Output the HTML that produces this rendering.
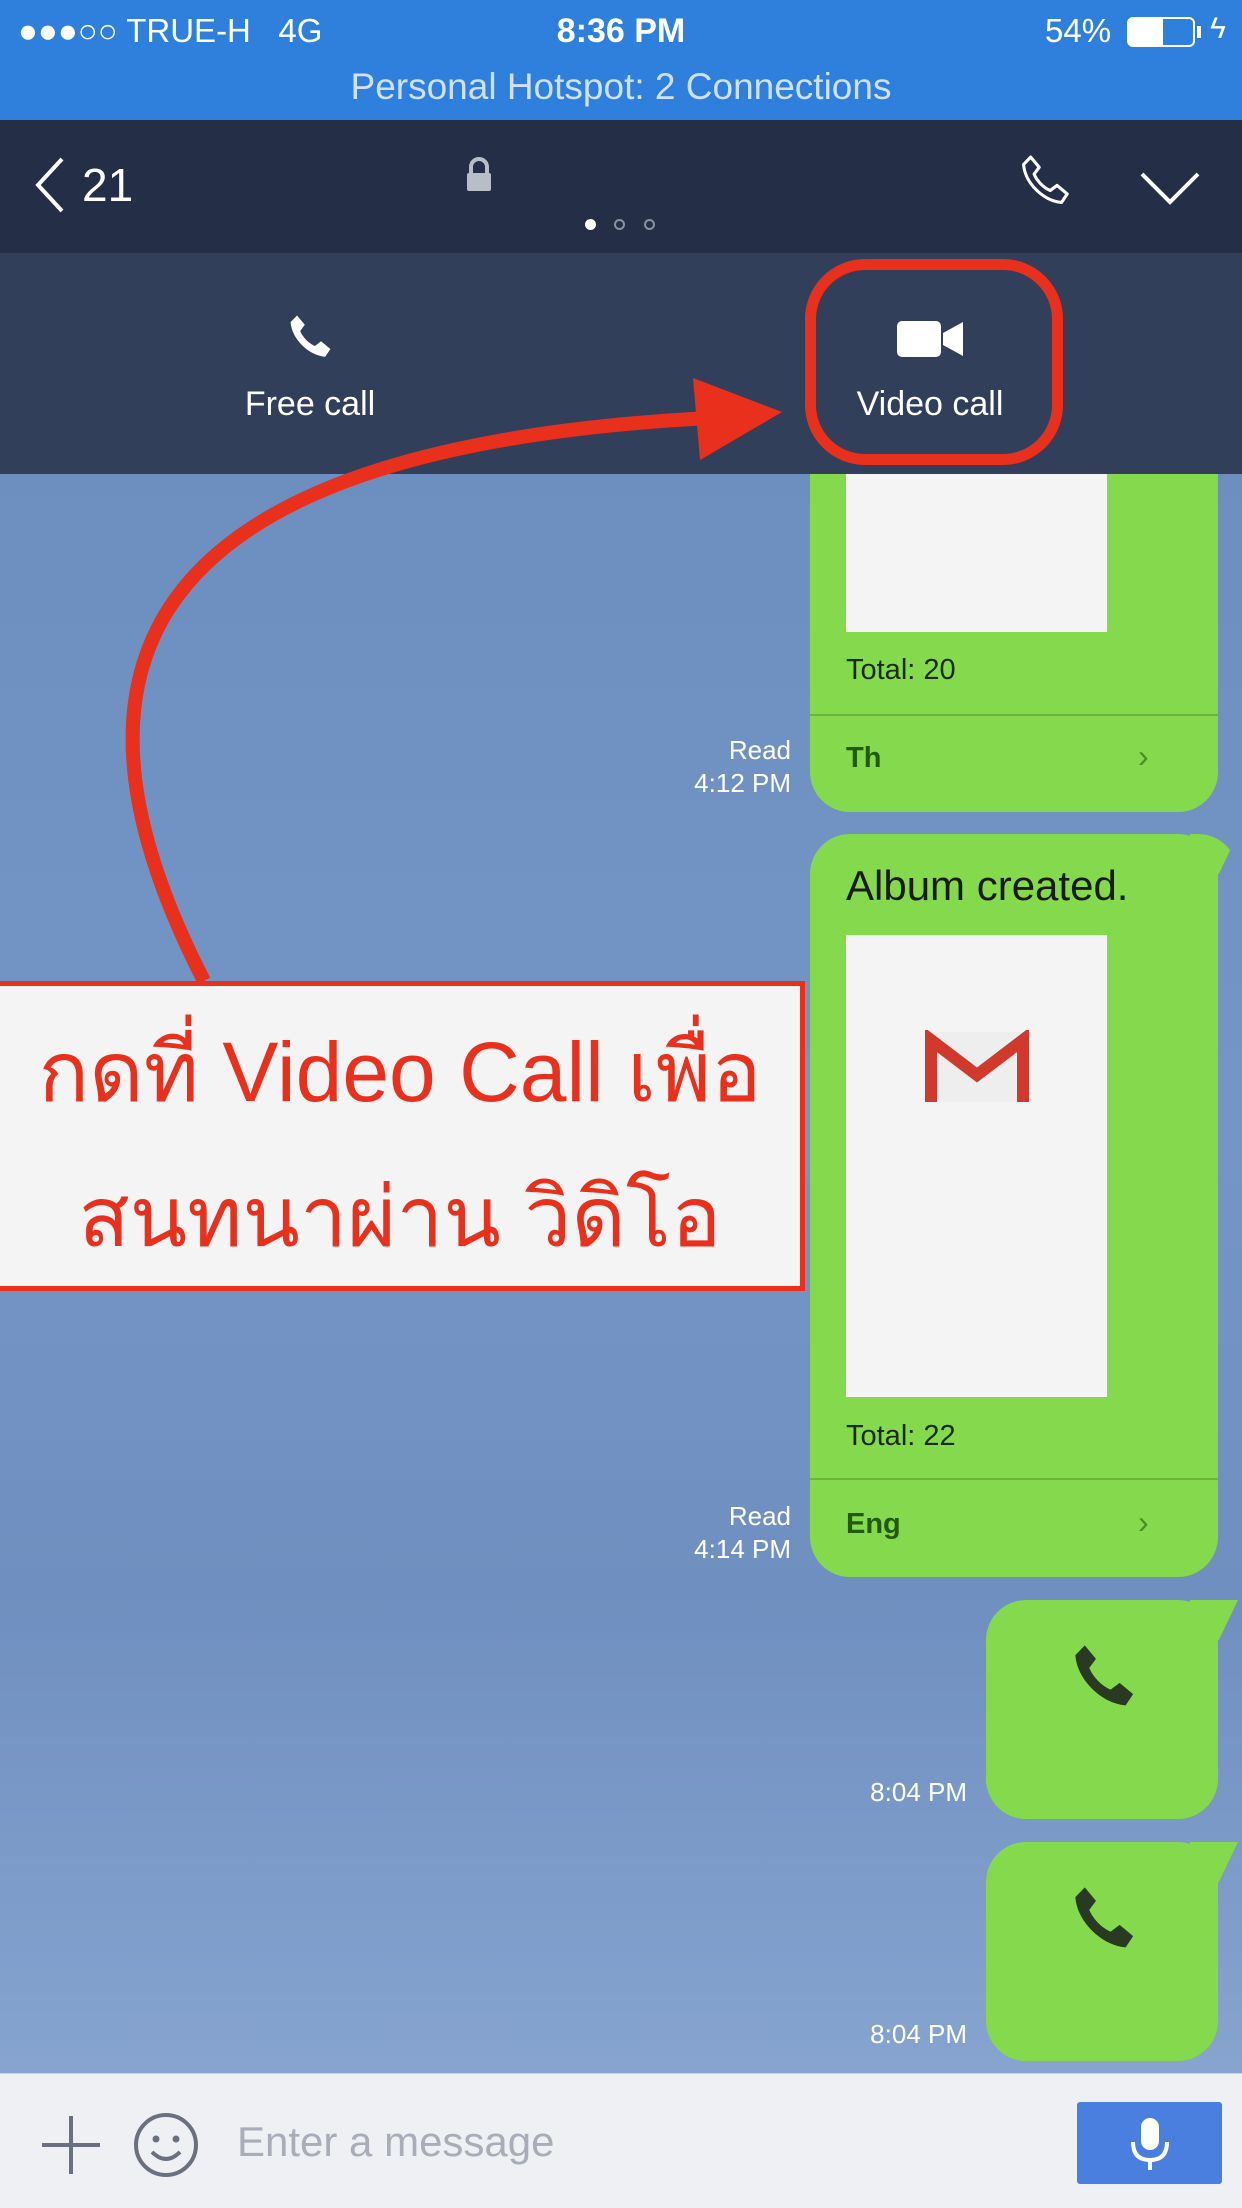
<!DOCTYPE html>
<html><head><meta charset="utf-8"><style>
*{margin:0;padding:0;box-sizing:border-box}
body{width:1242px;height:2208px;position:relative;overflow:hidden;font-family:"Liberation Sans","Noto Sans CJK SC",sans-serif;background:#6d8fbf}
.a{position:absolute}
.status{left:0;top:0;width:1242px;height:120px;background:#2f7fdd;color:#fff}
.nav{left:0;top:120px;width:1242px;height:133px;background:#242e46}
.panel{left:0;top:253px;width:1242px;height:221px;background:#323f5a}
.chat{left:0;top:474px;width:1242px;height:1599px;background:linear-gradient(180deg,#6d8fbf 0%,#7496c6 40%,#6f8fc0 70%,#86a4cf 100%)}
.bub{background:#84d94c;border-radius:40px}
.img{background:#f4f4f4}
.t{color:#1d2a14;font-size:29px}
.time{color:#fff;font-size:26px;text-align:right;line-height:33px}
.tail{width:30px;height:30px;border-top:14px solid #84d94c;border-right:0;border-radius:0 22px 0 0}
.input{left:0;top:2073px;width:1242px;height:135px;background:#eef0f4;border-top:1px solid #d0d4db}
</style></head><body>
<div class="a chat"></div>
<!-- bubble 1 -->
<div class="a bub" style="left:810px;top:420px;width:408px;height:392px"></div>
<div class="a img" style="left:846px;top:474px;width:261px;height:158px"></div>
<div class="a t" style="left:846px;top:654px">Total: 20</div>
<div class="a" style="left:810px;top:714px;width:408px;height:2px;background:#6cb43c"></div>
<div class="a t" style="left:846px;top:742px;font-weight:bold;color:#235a12">Th</div>
<div class="a t" style="left:1138px;top:738px;color:#4e8a2a;font-size:32px">›</div>
<div class="a time" style="left:600px;width:191px;top:734px">Read<br>4:12 PM</div>
<!-- bubble 2 -->
<div class="a bub" style="left:810px;top:834px;width:408px;height:743px"></div>
<div class="a" style="left:1190px;top:834px;width:48px;height:40px;background:#84d94c;border-radius:0 40px 0 0;clip-path:polygon(0 0,100% 0,60% 100%,0 100%)"></div>
<div class="a" style="left:846px;top:862px;font-size:42px;color:#1a1a1a">Album created.</div>
<div class="a img" style="left:846px;top:935px;width:261px;height:462px"></div>
<svg class="a" style="left:925px;top:1030px" width="105" height="75"><rect x="2" y="2" width="100" height="70" fill="#eee"/><path d="M6 72 V10 L52 45 L98 10 V72" stroke="#d0392b" stroke-width="12" fill="none"/></svg>
<div class="a t" style="left:846px;top:1420px">Total: 22</div>
<div class="a" style="left:810px;top:1478px;width:408px;height:2px;background:#6cb43c"></div>
<div class="a t" style="left:846px;top:1508px;font-weight:bold;color:#235a12">Eng</div>
<div class="a t" style="left:1138px;top:1504px;color:#4e8a2a;font-size:32px">›</div>
<div class="a time" style="left:600px;width:191px;top:1500px">Read<br>4:14 PM</div>
<!-- bubble 3 -->
<div class="a bub" style="left:986px;top:1600px;width:232px;height:219px"></div>
<div class="a" style="left:1190px;top:1600px;width:48px;height:40px;background:#84d94c;clip-path:polygon(0 0,100% 0,60% 100%,0 100%)"></div>
<svg class="a" style="left:1060px;top:1636px" width="90" height="90" viewBox="0 0 24 24"><path d="M6.6 2.5l3 3.6-1.8 2.4c1 2.4 3.3 4.8 5.7 5.8l2.4-1.8 3.6 3-2 3c-6.5-.5-13-7-13.4-13.4z" fill="#2a3a22"/></svg>
<div class="a time" style="left:800px;width:167px;top:1776px">8:04 PM</div>
<!-- bubble 4 -->
<div class="a bub" style="left:986px;top:1842px;width:232px;height:219px"></div>
<div class="a" style="left:1190px;top:1842px;width:48px;height:40px;background:#84d94c;clip-path:polygon(0 0,100% 0,60% 100%,0 100%)"></div>
<svg class="a" style="left:1060px;top:1878px" width="90" height="90" viewBox="0 0 24 24"><path d="M6.6 2.5l3 3.6-1.8 2.4c1 2.4 3.3 4.8 5.7 5.8l2.4-1.8 3.6 3-2 3c-6.5-.5-13-7-13.4-13.4z" fill="#2a3a22"/></svg>
<div class="a time" style="left:800px;width:167px;top:2018px">8:04 PM</div>

<div class="a status">
 <div class="a" style="left:18px;top:12px;font-size:33px">●●●○○ TRUE-H&nbsp;&nbsp;&nbsp;4G</div>
 <div class="a" style="left:0;width:1242px;text-align:center;top:12px;font-size:34px;font-weight:bold">8:36 PM</div>
 <div class="a" style="left:1045px;top:12px;font-size:33px">54%</div>
 <div class="a" style="left:1127px;top:17px;width:68px;height:30px;border:2px solid #fff;border-radius:6px"><div style="width:34px;height:100%;background:#fff"></div></div>
 <div class="a" style="left:1197px;top:26px;width:4px;height:12px;background:#fff"></div>
 <div class="a" style="left:1210px;top:12px;font-size:30px">ϟ</div>
 <div class="a" style="left:0;width:1242px;text-align:center;top:66px;font-size:37px;color:#cfe0f7">Personal Hotspot: 2 Connections</div>
</div>
<div class="a nav">
 <svg class="a" style="left:30px;top:35px" width="40" height="60"><path d="M32 4 L8 30 L32 56" stroke="#fff" stroke-width="4" fill="none"/></svg>
 <div class="a" style="left:82px;top:38px;font-size:46px;color:#fff">21</div>
 <svg class="a" style="left:463px;top:37px" width="32" height="36"><path d="M8 16 V10 a8 8 0 0 1 16 0 V16" stroke="#b8bdc8" stroke-width="4" fill="none"/><rect x="4" y="16" width="24" height="18" rx="2" fill="#b8bdc8"/></svg>
 <div class="a" style="left:585px;top:99px;width:11px;height:11px;border-radius:50%;background:#fff"></div>
 <div class="a" style="left:614px;top:99px;width:11px;height:11px;border-radius:50%;border:2px solid #8a91a0"></div>
 <div class="a" style="left:644px;top:99px;width:11px;height:11px;border-radius:50%;border:2px solid #8a91a0"></div>
 <svg class="a" style="left:1012px;top:30px" width="68" height="68" viewBox="0 0 24 24"><path d="M6.6 2.5l3 3.6-1.8 2.4c1 2.4 3.3 4.8 5.7 5.8l2.4-1.8 3.6 3-2 3c-6.5-.5-13-7-13.4-13.4z" stroke="#fff" stroke-width="1.1" fill="none" stroke-linejoin="round"/></svg>
 <svg class="a" style="left:1139px;top:50px" width="62" height="36"><path d="M3 4 L31 32 L59 4" stroke="#fff" stroke-width="4" fill="none"/></svg>
</div>
<div class="a panel">
 <svg class="a" style="left:280px;top:56px" width="62" height="62" viewBox="0 0 24 24"><path d="M6.6 2.5l3 3.6-1.8 2.4c1 2.4 3.3 4.8 5.7 5.8l2.4-1.8 3.6 3-2 3c-6.5-.5-13-7-13.4-13.4z" fill="#fff"/></svg>
 <div class="a" style="left:110px;width:400px;text-align:center;top:132px;font-size:34px;color:#fff">Free call</div>
 <svg class="a" style="left:897px;top:66px" width="68" height="40"><rect x="0" y="2" width="44" height="36" rx="5" fill="#fff"/><path d="M46 14 L66 3 V37 L46 26z" fill="#fff"/></svg>
 <div class="a" style="left:730px;width:400px;text-align:center;top:132px;font-size:34px;color:#fff">Video call</div>
</div>
<!-- annotation -->
<div class="a" style="left:805px;top:259px;width:258px;height:206px;border:11px solid #e8301c;border-radius:60px"></div>
<svg class="a" style="left:0;top:0" width="1242" height="1000">
 <path d="M204 981 C 60 700, 90 450, 710 418" stroke="#e8301c" stroke-width="14" fill="none"/>
 <path d="M782 412 L693 378 L700 460z" fill="#e8301c"/>
</svg>
<div class="a" style="left:-6px;top:981px;width:811px;height:310px;background:#f4f4f4;border:5px solid #e8301c"></div>
<div class="a" style="left:0;width:800px;text-align:center;top:1000px;font-size:84px;color:#e8301c;line-height:145px;font-family:'Liberation Sans','Noto Sans CJK SC',sans-serif">กดที่ Video Call เพื่อ<br>สนทนาผ่าน วิดิโอ</div>
<!-- input -->
<div class="a input">
 <svg class="a" style="left:40px;top:40px" width="62" height="62"><path d="M31 2 V60 M2 31 H60" stroke="#6a7080" stroke-width="4"/></svg>
 <svg class="a" style="left:133px;top:38px" width="66" height="66"><circle cx="33" cy="33" r="30" stroke="#6a7080" stroke-width="4" fill="none"/><circle cx="23" cy="27" r="3.5" fill="#6a7080"/><circle cx="43" cy="27" r="3.5" fill="#6a7080"/><path d="M19 40 Q33 54 47 40" stroke="#6a7080" stroke-width="4" fill="none"/></svg>
 <div class="a" style="left:237px;top:44px;font-size:42px;color:#a9adb8">Enter a message</div>
 <div class="a" style="left:1077px;top:28px;width:145px;height:82px;background:#4a7fe0;border-radius:3px">
  <svg class="a" style="left:50px;top:14px" width="46" height="56"><rect x="14" y="2" width="18" height="32" rx="9" fill="#fff"/><path d="M6 26 Q6 44 23 44 Q40 44 40 26 M23 44 V54" stroke="#fff" stroke-width="4" fill="none"/></svg>
 </div>
</div>
</body></html>
